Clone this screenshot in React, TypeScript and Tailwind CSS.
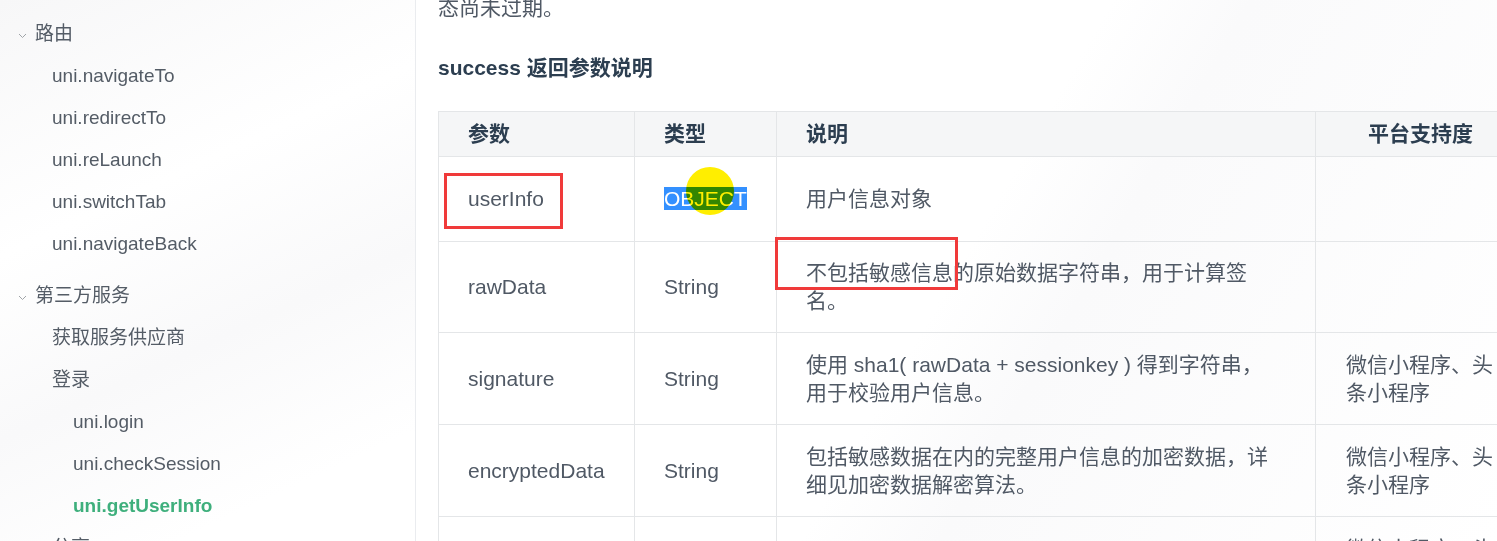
import { FC } from "react";

interface NavItem {
  label: string;
  level: 2 | 3;
  active?: boolean;
}

const routeItems: NavItem[] = [
  { label: "uni.navigateTo", level: 2 },
  { label: "uni.redirectTo", level: 2 },
  { label: "uni.reLaunch", level: 2 },
  { label: "uni.switchTab", level: 2 },
  { label: "uni.navigateBack", level: 2 },
];

const serviceItems: NavItem[] = [
  { label: "获取服务供应商", level: 2 },
  { label: "登录", level: 2 },
  { label: "uni.login", level: 3 },
  { label: "uni.checkSession", level: 3 },
  { label: "uni.getUserInfo", level: 3, active: true },
  { label: "分享", level: 2 },
];

const Chevron: FC = () => (
  <svg width="9" height="6" viewBox="0 0 9 6" fill="none" className="mt-[3px] shrink-0">
    <path d="M1 1l3.5 3.5L8 1" stroke="#a0a4a8" strokeWidth="1" />
  </svg>
);

const NavGroup: FC<{ title: string; items: NavItem[]; className?: string }> = ({
  title,
  items,
  className,
}) => (
  <div className={className}>
    <div className="flex h-[42px] items-center gap-[8px] pl-[18px]">
      <Chevron />
      <span>{title}</span>
    </div>
    {items.map((item) => (
      <div
        key={item.label}
        className={
          "flex h-[42px] items-center " +
          (item.level === 3 ? "pl-[73px] " : "pl-[52px] ") +
          (item.active ? "font-bold text-[#3eaf7c]" : "")
        }
      >
        {item.label}
      </div>
    ))}
  </div>
);

interface Row {
  name: string;
  type: string;
  desc: string;
  platform: string;
  height: string;
  highlight?: boolean;
}

const rows: Row[] = [
  { name: "userInfo", type: "OBJECT", desc: "用户信息对象", platform: "", height: "h-[85px]", highlight: true },
  { name: "rawData", type: "String", desc: "不包括敏感信息的原始数据字符串，用于计算签名。", platform: "", height: "h-[91px]" },
  {
    name: "signature",
    type: "String",
    desc: "使用 sha1( rawData + sessionkey ) 得到字符串，用于校验用户信息。",
    platform: "微信小程序、头条小程序",
    height: "h-[92px]",
  },
  {
    name: "encryptedData",
    type: "String",
    desc: "包括敏感数据在内的完整用户信息的加密数据，详细见加密数据解密算法。",
    platform: "微信小程序、头条小程序",
    height: "h-[92px]",
  },
  {
    name: "iv",
    type: "String",
    desc: "加密算法的初始向量，详细见加密数据解密算法。",
    platform: "微信小程序、头条小程序",
    height: "h-[92px]",
  },
];

export default function App() {
  return (
    <div className='relative flex h-[541px] w-[1497px] overflow-hidden bg-white font-["Liberation_Sans","Noto_Sans_CJK_SC",sans-serif]'>
      {/* SIDEBAR */}
      <aside className="w-[416px] shrink-0 border-r border-[#eaecef] bg-[linear-gradient(155deg,#f7f7f8_0%,#ffffff_35%,#f9f9fa_60%,#ffffff_85%)] pt-[13px] text-[19px] text-[#545c66]">
        <NavGroup title="路由" items={routeItems} />
        <NavGroup title="第三方服务" items={serviceItems} className="mt-[10px]" />
      </aside>

      {/* CONTENT */}
      <main className="min-w-0 flex-1 bg-[linear-gradient(120deg,#ffffff_0%,#ffffff_50%,#fafafb_60%,#ffffff_100%)] pl-[22px] text-[21px] leading-[28px] text-[#505965]">
        <p className="-mt-[6px]">态尚未过期。</p>
        <h4 className="mt-[32px] font-bold text-[#2c3e50]">success 返回参数说明</h4>

        <table className="mt-[29px] w-[1087px] table-fixed border-collapse">
          <thead>
            <tr className="h-[45px] bg-[#f5f6f7] font-bold text-[#2c3e50]">
              <th className="w-[196px] border border-[#e4e6e8] pl-[29px] text-left">参数</th>
              <th className="w-[142px] border border-[#e4e6e8] pl-[29px] text-left">类型</th>
              <th className="w-[539px] border border-[#e4e6e8] pl-[29px] text-left">说明</th>
              <th className="w-[210px] border border-[#e4e6e8] px-[30px] text-center">平台支持度</th>
            </tr>
          </thead>
          <tbody>
            {rows.map((row) => (
              <tr key={row.name} className={row.height}>
                <td className="border border-[#e4e6e8] pl-[29px] pr-[30px]">{row.name}</td>
                <td className="border border-[#e4e6e8] pl-[29px] pr-[20px]">
                  {row.highlight ? (
                    <span className="bg-[#3390ff] text-white">{row.type}</span>
                  ) : (
                    row.type
                  )}
                </td>
                <td className="border border-[#e4e6e8] pl-[29px] pr-[36px]">{row.desc}</td>
                <td className="border border-[#e4e6e8] px-[30px]">{row.platform}</td>
              </tr>
            ))}
          </tbody>
        </table>
      </main>

      {/* ANNOTATIONS */}
      <div className="pointer-events-none absolute left-[686px] top-[167px] h-[48px] w-[48px] rounded-full bg-[#ffee00] mix-blend-multiply" />
      <div className="pointer-events-none absolute left-[444px] top-[173px] h-[56px] w-[119px] border-[3px] border-[#f03a3a]" />
      <div className="pointer-events-none absolute left-[775px] top-[237px] h-[53px] w-[183px] border-[3px] border-[#f03a3a]" />
    </div>
  );
}
